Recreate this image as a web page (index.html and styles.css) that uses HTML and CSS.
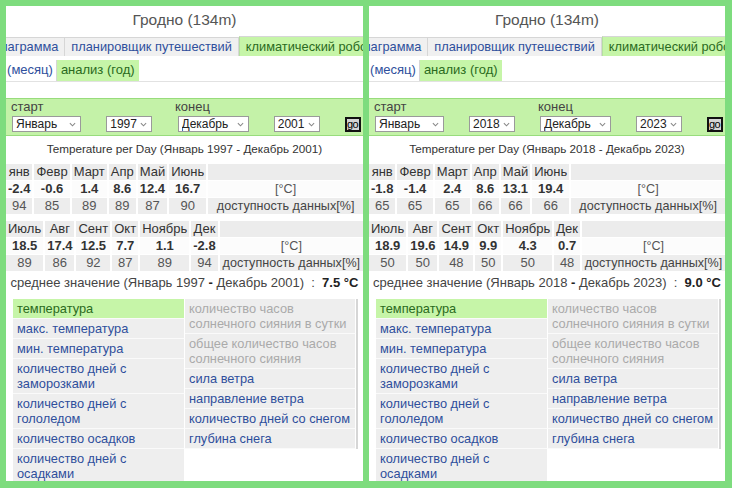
FILE: index.html
```html
<!DOCTYPE html>
<html lang="ru">
<head>
    <meta charset="UTF-8">
    <meta name="viewport" content="width=device-width, initial-scale=1.0">
    <title>Гродно - климатический робот</title>
    <link rel="stylesheet" href="styles.css">
</head>
<body>
<div class="screen">

    <div class="panel">
        <h2 class="city">Гродно (134m)</h2>
        <div class="tabs">
            <span class="tab tab-first">диаграмма</span>
            <span class="tab">планировщик путешествий</span>
            <span class="tab tab-active">климатический робот</span>
        </div>
        <div class="subtabs">
            <span class="subtab subtab-first">анализ (месяц)</span>
            <span class="subtab subtab-active">анализ (год)</span>
        </div>

        <form class="range">
            <div class="range-labels">
                <span class="lbl-start">старт</span>
                <span>конец</span>
            </div>
            <div class="range-row">
                <span class="sel sel-month"><select><option>Январь</option></select><svg class="chev" viewBox="0 0 8 5"><path d="M1 1l3 3 3-3"/></svg></span>
                <span class="sel sel-year"><select><option>1997</option></select><svg class="chev" viewBox="0 0 8 5"><path d="M1 1l3 3 3-3"/></svg></span>
                <span class="sel sel-month2"><select><option>Декабрь</option></select><svg class="chev" viewBox="0 0 8 5"><path d="M1 1l3 3 3-3"/></svg></span>
                <span class="sel sel-year"><select><option>2001</option></select><svg class="chev" viewBox="0 0 8 5"><path d="M1 1l3 3 3-3"/></svg></span>
                <button type="button" class="go">go</button>
            </div>
        </form>

        <div class="chart-title">Temperature per Day (Январь 1997 - Декабрь 2001)</div>

        <table class="climate">
            <tr class="row-head"><td>янв</td><td>Февр</td><td>Март</td><td>Апр</td><td>Май</td><td>Июнь</td><td class="unit"></td></tr>
            <tr class="row-val"><td>-2.4</td><td>-0.6</td><td>1.4</td><td>8.6</td><td>12.4</td><td>16.7</td><td class="unit">[°C]</td></tr>
            <tr class="row-avail"><td>94</td><td>85</td><td>89</td><td>89</td><td>87</td><td>90</td><td class="unit">доступность данных[%]</td></tr>
        </table>

        <table class="climate climate-second">
            <tr class="row-head"><td>Июль</td><td>Авг</td><td>Сент</td><td>Окт</td><td>Ноябрь</td><td>Дек</td><td class="unit"></td></tr>
            <tr class="row-val"><td>18.5</td><td>17.4</td><td>12.5</td><td>7.7</td><td>1.1</td><td>-2.8</td><td class="unit">[°C]</td></tr>
            <tr class="row-avail"><td>89</td><td>86</td><td>92</td><td>87</td><td>89</td><td>94</td><td class="unit">доступность данных[%]</td></tr>
            <tr class="row-mean"><td colspan="7">среднее значение (Январь 1997 <b>-</b> Декабрь 2001) &nbsp;:&nbsp; <b>7.5 °C</b></td></tr>
        </table>

        <div class="params">
            <div class="param-col">
                <a class="param param-active">температура</a>
                <a class="param">макс. температура</a>
                <a class="param">мин. температура</a>
                <a class="param">количество дней с заморозками</a>
                <a class="param">количество дней с гололедом</a>
                <a class="param">количество осадков</a>
                <a class="param">количество дней с осадками</a>
            </div>
            <div class="param-col param-col-right">
                <a class="param param-off">количество часов солнечного сияния в сутки</a>
                <a class="param param-off">общее количество часов солнечного сияния</a>
                <a class="param">сила ветра</a>
                <a class="param">направление ветра</a>
                <a class="param">количество дней со снегом</a>
                <a class="param">глубина снега</a>
            </div>
        </div>
    </div>

    <div class="panel">
        <h2 class="city">Гродно (134m)</h2>
        <div class="tabs">
            <span class="tab tab-first">диаграмма</span>
            <span class="tab">планировщик путешествий</span>
            <span class="tab tab-active">климатический робот</span>
        </div>
        <div class="subtabs">
            <span class="subtab subtab-first">анализ (месяц)</span>
            <span class="subtab subtab-active">анализ (год)</span>
        </div>

        <form class="range">
            <div class="range-labels">
                <span class="lbl-start">старт</span>
                <span>конец</span>
            </div>
            <div class="range-row">
                <span class="sel sel-month"><select><option>Январь</option></select><svg class="chev" viewBox="0 0 8 5"><path d="M1 1l3 3 3-3"/></svg></span>
                <span class="sel sel-year"><select><option>2018</option></select><svg class="chev" viewBox="0 0 8 5"><path d="M1 1l3 3 3-3"/></svg></span>
                <span class="sel sel-month2"><select><option>Декабрь</option></select><svg class="chev" viewBox="0 0 8 5"><path d="M1 1l3 3 3-3"/></svg></span>
                <span class="sel sel-year"><select><option>2023</option></select><svg class="chev" viewBox="0 0 8 5"><path d="M1 1l3 3 3-3"/></svg></span>
                <button type="button" class="go">go</button>
            </div>
        </form>

        <div class="chart-title">Temperature per Day (Январь 2018 - Декабрь 2023)</div>

        <table class="climate">
            <tr class="row-head"><td>янв</td><td>Февр</td><td>Март</td><td>Апр</td><td>Май</td><td>Июнь</td><td class="unit"></td></tr>
            <tr class="row-val"><td>-1.8</td><td>-1.4</td><td>2.4</td><td>8.6</td><td>13.1</td><td>19.4</td><td class="unit">[°C]</td></tr>
            <tr class="row-avail"><td>65</td><td>65</td><td>65</td><td>66</td><td>66</td><td>66</td><td class="unit">доступность данных[%]</td></tr>
        </table>

        <table class="climate climate-second">
            <tr class="row-head"><td>Июль</td><td>Авг</td><td>Сент</td><td>Окт</td><td>Ноябрь</td><td>Дек</td><td class="unit"></td></tr>
            <tr class="row-val"><td>18.9</td><td>19.6</td><td>14.9</td><td>9.9</td><td>4.3</td><td>0.7</td><td class="unit">[°C]</td></tr>
            <tr class="row-avail"><td>50</td><td>50</td><td>48</td><td>50</td><td>50</td><td>48</td><td class="unit">доступность данных[%]</td></tr>
            <tr class="row-mean"><td colspan="7">среднее значение (Январь 2018 <b>-</b> Декабрь 2023) &nbsp;:&nbsp; <b>9.0 °C</b></td></tr>
        </table>

        <div class="params">
            <div class="param-col">
                <a class="param param-active">температура</a>
                <a class="param">макс. температура</a>
                <a class="param">мин. температура</a>
                <a class="param">количество дней с заморозками</a>
                <a class="param">количество дней с гололедом</a>
                <a class="param">количество осадков</a>
                <a class="param">количество дней с осадками</a>
            </div>
            <div class="param-col param-col-right">
                <a class="param param-off">количество часов солнечного сияния в сутки</a>
                <a class="param param-off">общее количество часов солнечного сияния</a>
                <a class="param">сила ветра</a>
                <a class="param">направление ветра</a>
                <a class="param">количество дней со снегом</a>
                <a class="param">глубина снега</a>
            </div>
        </div>
    </div>

</div>
</body>
</html>
```

FILE: styles.css
```css
body {
    margin: 0;
    background-color: #7edc7e;
    font-family: 'Liberation Sans', Arial, sans-serif;
    font-size: 13px;
}

.screen {
    display: flex;
    gap: 6px;
    padding: 6px 7px 7px 6px;
    height: 488px;
    box-sizing: border-box;
}

.panel {
    width: 357px;
    height: 475px;
    background-color: #fff;
    overflow: hidden;
    flex: none;
}

.panel + .panel {
    width: 356px;
}

.city {
    margin: 0;
    height: 30px;
    line-height: 27px;
    text-align: center;
    font-size: 15.5px;
    font-weight: normal;
    color: #555;
}

/* tabs */

.tabs {
    display: flex;
    align-items: flex-end;
    height: 20px;
    white-space: nowrap;
    font-size: 12.8px;
}

.tab {
    flex: none;
    padding: 0 6px;
    line-height: 18px;
    color: #2e4f9c;
    background-color: #f0f0f0;
    border: 1px solid #d6d6d6;
    border-bottom: none;
    border-left: none;
}

.tab-first {
    margin-left: -19px;
}

.tab-active {
    line-height: 19px;
    background-color: #c6f5a8;
    border-left: 1px solid #b5dfa0;
    color: #2a6a20;
}

.subtabs {
    display: flex;
    margin-top: 4px;
    height: 21px;
    border-bottom: 1px solid #e2e2e2;
    white-space: nowrap;
}

.subtab {
    flex: none;
    padding: 0 3px;
    line-height: 20px;
    color: #2e4f9c;
}

.subtab-first {
    margin-left: -48px;
    border-right: 1px solid #d6d6d6;
}

.subtab-active {
    background-color: #c6f5a8;
    color: #2a6a20;
    padding: 0 4px;
}

/* start / end form */

.range {
    margin: 16px 0 0;
    padding: 1px 2px 3px 6px;
    background-color: #c4f2a8;
    border-top: 1px solid #98dc7c;
    border-bottom: 1px solid #98dc7c;
}

.range-labels {
    display: flex;
    line-height: 14px;
    color: #444;
}

.lbl-start {
    width: 164px;
    margin-left: -1px;
}

.range-row {
    display: flex;
    align-items: center;
    justify-content: space-between;
    margin-top: 2px;
}

.sel {
    position: relative;
    display: block;
    height: 16px;
}

.sel select {
    appearance: none;
    -webkit-appearance: none;
    display: block;
    width: 100%;
    height: 16px;
    margin: 0;
    padding: 0 0 0 3px;
    border: 1px solid #9a9a9a;
    border-radius: 0;
    background-color: #fff;
    font-family: 'Liberation Sans', Arial, sans-serif;
    font-size: 12px;
    line-height: 14px;
    color: #222;
}

.chev {
    position: absolute;
    right: 5px;
    top: 6px;
    width: 7px;
    height: 5px;
    fill: none;
    stroke: #888;
    stroke-width: 1.2;
}

.sel-month {
    width: 69px;
}

.sel-month2 {
    width: 71px;
}

.sel-year {
    width: 46px;
}

.go {
    width: 16px;
    height: 15px;
    padding: 0;
    border: 2px solid #111;
    background-color: #d4d4d4;
    font-family: 'Liberation Sans', Arial, sans-serif;
    font-size: 11px;
    line-height: 10px;
    letter-spacing: -0.5px;
    text-indent: -1px;
    overflow: hidden;
    color: #000;
}

/* tables */

.chart-title {
    margin-top: 5px;
    text-align: center;
    font-size: 11.7px;
    line-height: 16px;
    color: #333;
}

.climate {
    margin-top: 6px;
    margin-left: -2px;
    width: calc(100% + 4px);
    border-spacing: 2px 1px;
    white-space: nowrap;
    color: #333;
}

.climate-second {
    margin-top: 5px;
}

.climate td {
    padding: 0 2px;
    height: 16px;
    line-height: 16px;
    text-align: center;
}

.climate td.unit {
    width: 100%;
    padding: 0;
    font-size: 12.6px;
    font-weight: normal;
    color: #555;
}

.row-head td {
    background-color: #ececec;
}

.row-val td {
    font-weight: bold;
    background-color: #fcfcfc;
}

.row-avail td {
    background-color: #ededed;
    color: #555;
}

.row-avail td.unit {
    color: #444;
}

.row-mean td {
    padding-top: 3px;
    color: #444;
    background-color: #fff;
}

.row-mean b {
    color: #222;
}

/* parameter list */

.params {
    display: flex;
    margin: 7px 5px 0 7px;
}

.param-col {
    width: 172px;
    flex: none;
}

.param-col-right {
    width: 171px;
    border-right: 2px solid #d6d6d6;
    align-self: flex-start;
}

.param {
    display: block;
    padding: 2px 2px 2px 4px;
    font-size: 12.8px;
    line-height: 15px;
    color: #2e4f9c;
    background-color: #eeeeee;
    border-bottom: 1px solid #fafafa;
    border-right: 1px solid #fff;
}

.param-active {
    background-color: #c6f5a8;
    color: #2a6a20;
}

.param-off {
    color: #aaa;
}
```
